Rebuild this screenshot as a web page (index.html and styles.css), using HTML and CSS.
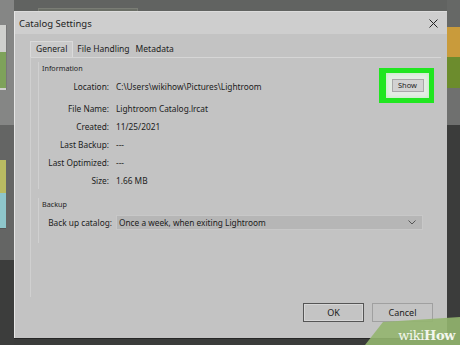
FILE: index.html
```html
<!DOCTYPE html>
<html>
<head>
<meta charset="utf-8">
<link rel="stylesheet" href="styles.css">
</head>
<body>
<div class="desk">
  <div class="bg bg-top"></div>
  <div class="bg bg-topbox"></div>
  <div class="bg bg-left1"></div>
  <div class="bg bg-leftimg"></div>
  <div class="bg bg-leftgreen"></div>
  <div class="bg bg-left2"></div>
  <div class="bg bg-yellow"></div>
  <div class="bg bg-cyan"></div>
  <div class="bg bg-left3"></div>
  <div class="bg bg-r1"></div>
  <div class="bg bg-orange"></div>
  <div class="bg bg-green"></div>
  <div class="bg bg-r2"></div>

  <div class="dialog">
    <div class="titlebar">
      <span class="title">Catalog Settings</span>
      <svg class="close" width="9" height="9" viewBox="0 0 9 9"><path d="M0.5 0.5 L8.5 8.5 M8.5 0.5 L0.5 8.5" stroke="#222" stroke-width="1"/></svg>
    </div>
    <div class="body">
      <div class="tabs">
        <div class="tab active">General</div>
        <div class="tab">File Handling</div>
        <div class="tab">Metadata</div>
      </div>
      <div class="panel">
        <div class="group">
          <div class="group-title">Information</div>
          <div class="rows">
            <div class="row first">
              <span class="label">Location:</span>
              <span class="value">C:\Users\wikihow\Pictures\Lightroom</span>
              <div class="highlight"><div class="glow"><button class="show">Show</button></div></div>
            </div>
            <div class="row"><span class="label">File Name:</span><span class="value">Lightroom Catalog.lrcat</span></div>
            <div class="row"><span class="label">Created:</span><span class="value">11/25/2021</span></div>
            <div class="row"><span class="label">Last Backup:</span><span class="value">---</span></div>
            <div class="row"><span class="label">Last Optimized:</span><span class="value">---</span></div>
            <div class="row"><span class="label">Size:</span><span class="value">1.66 MB</span></div>
          </div>
        </div>
        <div class="group backup">
          <div class="group-title">Backup</div>
          <div class="row">
            <span class="label wide">Back up catalog:</span>
            <div class="select">
              <span>Once a week, when exiting Lightroom</span>
              <svg width="8" height="5" viewBox="0 0 8 5"><path d="M0.5 0.5 L4 4 L7.5 0.5" fill="none" stroke="#555" stroke-width="1"/></svg>
            </div>
          </div>
        </div>
      </div>
      <div class="buttons">
        <button class="btn ok">OK</button>
        <button class="btn">Cancel</button>
      </div>
    </div>
  </div>

  <div class="wm">
    <svg class="wm-shape" width="95" height="28" viewBox="0 0 95 28"><polygon points="0,28 18,5 95,0 95,28" fill="#94b56f" opacity="0.9"/></svg>
    <span class="wm-text"><span class="wiki">wiki</span><span class="how">How</span></span>
  </div>
</div>
</body>
</html>
```

FILE: styles.css
```css
* { box-sizing: border-box; }
html, body { margin: 0; padding: 0; }
body { width: 460px; height: 345px; overflow: hidden; background: #3b3c3b; font-family: "Noto Sans", "Open Sans", sans-serif; }
.desk { position: relative; width: 460px; height: 345px; overflow: hidden; }
.bg { position: absolute; }
.bg-top { left: 0; top: 0; width: 460px; height: 30px; background: #616361; }
.bg-topbox { left: 38px; top: 8px; width: 100px; height: 10px; background: #6a6e66; border: 1px solid #7a7d75; }
.bg-left1 { left: 0; top: 0; width: 14px; height: 125px; background: #858685; }
.bg-leftimg { left: 0; top: 25px; width: 7px; height: 65px; background: #cfd0cd; border-right: 1px solid #777; }
.bg-leftgreen { left: 0; top: 52px; width: 6px; height: 36px; background: #7ea25a; }
.bg-left2 { left: 0; top: 125px; width: 14px; height: 135px; background: #646564; }
.bg-yellow { left: 0; top: 160px; width: 6px; height: 33px; background: #b9bb62; }
.bg-cyan { left: 0; top: 193px; width: 6px; height: 36px; background: #8ec6cb; border-bottom: 1px solid #555; }
.bg-left3 { left: 0; top: 260px; width: 14px; height: 85px; background: #3c3d3c; }
.bg-r1 { left: 447px; top: 0; width: 13px; height: 27px; background: #666866; }
.bg-orange { left: 447px; top: 27px; width: 13px; height: 30px; background: #c99b3b; }
.bg-green { left: 447px; top: 57px; width: 13px; height: 31px; background: #6c8c2d; }
.bg-r2 { left: 447px; top: 88px; width: 13px; height: 37px; background: #6f706f; }

.dialog {
  position: absolute; left: 14px; top: 11px; width: 433px; height: 327px;
  background: #c3c3c3; border-left: 1px solid #e6e6e6; border-top: 1px solid #dcdcdc;
  box-shadow: 0 1px 0 #262626;
  display: flex; flex-direction: column;
}
.titlebar { height: 22px; background: #cecece; display: flex; align-items: center; justify-content: space-between; padding: 0 9px 0 4px; }
.title { font-size: 9.5px; color: #1e1e1e; }
.close { display: block; }
.body { flex: 1; padding: 7px 6px 0 15px; display: flex; flex-direction: column; }
.tabs { display: flex; height: 16px; font-size: 8.5px; color: #1c1c1c; }
.tab { padding: 1px 3px 0 3px; line-height: 14px; }
.tab.active { background: #cbcbcb; border: 1px solid #dadada; border-bottom: none; padding: 0 5px; margin-right: 1px; }
.panel { height: 240px; border-top: 1px solid #d6d6d6; border-left: 1px solid #d0d0d0; padding: 4px 0 0 7px; font-size: 8.3px; color: #1c1c1c; }
.group { border-left: 1px solid #d0d0d0; }
.group-title { font-size: 7.2px; color: #222; padding-left: 3px; height: 14px; line-height: 12px; }
.rows { display: flex; flex-direction: column; }
.row { display: flex; align-items: center; height: 18px; position: relative; }
.row.first { margin-top: 1px; margin-bottom: 4px; }
.label { width: 70px; text-align: right; flex: none; }
.label.wide { width: 73px; }
.value { margin-left: 7px; }
.highlight { position: absolute; left: 340px; top: -9px; width: 55px; height: 35px; background: #20e620; padding: 5px 5px 5px 7px; }
.glow { width: 100%; height: 100%; background: #e4ece4; box-shadow: inset 0 0 4px #b8f0b8; display: flex; align-items: center; justify-content: center; }
.show { font-family: inherit; font-size: 7.5px; color: #222; background: #d2d2d2; border: 1px solid #a8a8a8; width: 32px; height: 13px; padding: 0; line-height: 11px; }
.backup { margin-top: 9px; height: 45px; }
.backup .group-title { height: 15px; }
.select { margin-left: 4px; width: 307px; height: 15px; background: #b6b6b6; border: 1px solid #c8c8c8; display: flex; align-items: center; justify-content: space-between; padding: 0 6px 0 2px; }
.buttons { display: flex; justify-content: flex-end; gap: 8px; margin-top: 6px; padding-right: 8px; }
.btn { font-family: inherit; font-size: 9px; color: #1c1c1c; width: 61px; height: 19px; background: #c4c4c4; border: 1px solid #a0a0a0; padding: 0; }
.btn.ok { border: 1px solid #555; box-shadow: inset 0 0 0 1px #d6d6d6; }

.wm { position: absolute; right: 0; bottom: 0; width: 95px; height: 28px; }
.wm-shape { position: absolute; left: 0; top: 0; }
.wm-text { position: absolute; right: 5px; bottom: 2px; font-family: "DejaVu Serif", "Liberation Serif", serif; font-size: 13px; color: #f3f6ee; font-weight: bold; letter-spacing: -0.4px; }
.wiki { font-weight: normal; }
```
